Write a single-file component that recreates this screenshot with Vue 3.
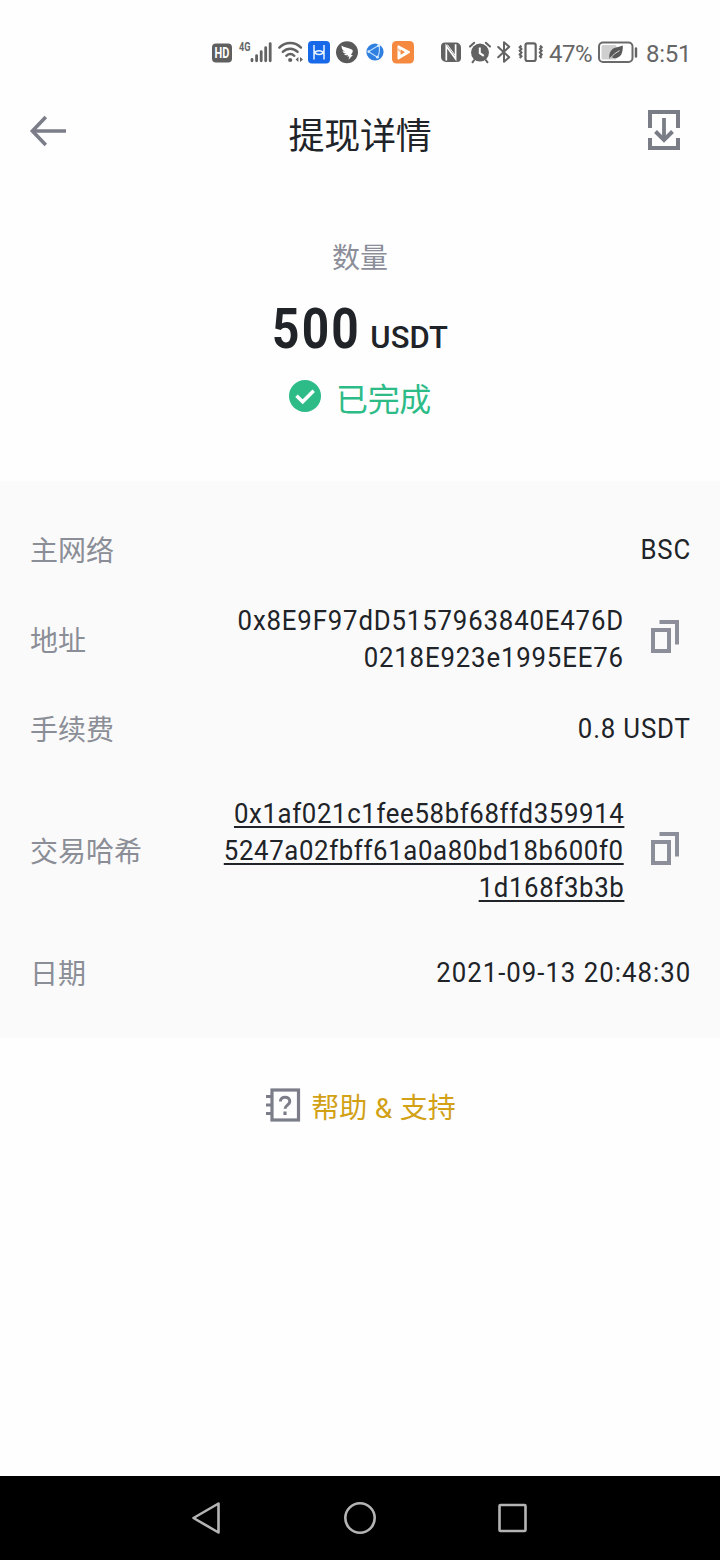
<script setup>
/**
 * Withdrawal detail screen: status bar, header, amount summary,
 * transaction fields, support link and the system navigation bar.
 */
const rows = [
  { key: 'network', label: '主网络', lines: ['BSC'] },
  {
    key: 'address',
    label: '地址',
    lines: ['0x8E9F97dD5157963840E476D', '0218E923e1995EE76'],
    copy: true,
  },
  { key: 'fee', label: '手续费', lines: ['0.8 USDT'] },
  {
    key: 'hash',
    label: '交易哈希',
    lines: ['0x1af021c1fee58bf68ffd359914', '5247a02fbff61a0a80bd18b600f0', '1d168f3b3b'],
    copy: true,
  },
  { key: 'date', label: '日期', lines: ['2021-09-13 20:48:30'] },
]
</script>

<template>
  <div class="screen">
    <div class="status">
      <div class="status-left">
        <!-- HD voice -->
        <svg width="20" height="26" viewBox="0 0 20 26">
          <rect x="0" y="3.5" width="20" height="19" rx="4" fill="#5f5f5f" />
          <text x="2.6" y="17.8" class="hd" textLength="14.8" lengthAdjust="spacingAndGlyphs">HD</text>
        </svg>
        <!-- mobile signal -->
        <svg class="signal" width="34" height="26" viewBox="0 0 34 26">
          <text x="0" y="10.8" class="net" textLength="11.5" lengthAdjust="spacingAndGlyphs">4G</text>
          <g stroke="#636363" stroke-width="2.8" stroke-linecap="round">
            <path d="M13 19.4v1.4M17.6 15.6v5.2M22.2 11.6v9.2M26.7 7.6v13.2M31.2 3.6v17.2" />
          </g>
        </svg>
        <!-- wifi -->
        <svg class="wifi" width="26" height="26" viewBox="0 0 26 26">
          <g fill="none" stroke="#636363" stroke-width="2.4" stroke-linecap="round">
            <path d="M1.3 7.6C7.5 1.4 17 1.4 23 7.6" />
            <path d="M4.8 11.9c4.4-4.2 10.6-4.2 14.8 0" />
            <path d="M8.3 15.8c2.4-2.1 5.6-2.1 8 0" />
          </g>
          <circle cx="12.2" cy="20" r="2.1" fill="#636363" />
          <path d="M20.4 17v5l-2.8-2.5zM22 17v5l3-2.5z" fill="#636363" />
        </svg>
        <!-- Huawei app -->
        <svg class="app" width="22" height="26" viewBox="0 0 22 26">
          <rect y="1" width="22" height="22.5" rx="4" fill="#1769ea" />
          <path d="M6 5v14.600M16 5v14.600M6 10.200c1.500 5.800 8.500 5.800 10 0M6 14.600c1.500-5.200 8.500-5.200 10 0" fill="none" stroke="#e8f2ff" stroke-width="1.5" />
        </svg>
        <!-- DingTalk -->
        <svg class="app" width="22" height="26" viewBox="0 0 22 26">
          <circle cx="11" cy="12.2" r="11" fill="#595959" />
          <path d="M5.500 5.500c2.500 1.700 6.500 2.500 9.700 3.700 1.600.6 2 1.500 1.300 3.100L14.900 15h2l-4.400 4.800.8-3.200h-2.100l.8-1.500c-2.100.4-3.400-.1-3.900-1.200.9.2 1.800.1 2.400-.1-2.600-.4-3.700-1.300-4-2.800 1.100.5 2 .7 3 .8-2.400-.9-4-2.700-4-6.300z" fill="#fff" />
        </svg>
        <!-- browser -->
        <svg class="globe" width="18" height="26" viewBox="0 0 18 26">
          <circle cx="9" cy="12" r="8.6" fill="#2f7fe0" />
          <path d="M2.700 11.400 12.500 5.400M2.700 11.800l8.700 5.400M13 5.400c1 4 .4 8.200-1.400 11.800" fill="none" stroke="#b9dcff" stroke-width="1.2" />
          <circle cx="12.6" cy="5.4" r="1.5" fill="#d9ecff" />
          <circle cx="2.7" cy="11.6" r="1.3" fill="#d9ecff" />
          <circle cx="11.4" cy="17.2" r="1.4" fill="#d9ecff" />
        </svg>
        <!-- video -->
        <svg class="video" width="22" height="26" viewBox="0 0 22 26">
          <rect y="1" width="22" height="22.5" rx="4.500" fill="#f5893f" />
          <path d="M6.500 6.300 17 12.200 6.500 18.500z" fill="#fff" stroke="#fff" stroke-width="2" stroke-linejoin="round" />
          <path d="M8.600 9.600 13 12.200l-4.400 2.500z" fill="#f5893f" />
          <path d="M5.200 8.500l4 3.700" stroke="#f9b283" stroke-width="1.2" />
        </svg>
      </div>
      <div class="status-right">
        <!-- NFC -->
        <svg width="20" height="26" viewBox="0 0 20 26">
          <path d="M4 2.500h11a5 5 0 0 1 5 5V18a4 4 0 0 1-4 4H5a5 5 0 0 1-5-5V6.500a4 4 0 0 1 4-4z" fill="#626262" />
          <path d="M5.300 20.500V6l9.300 12.800V4.300" fill="none" stroke="#fff" stroke-width="1.7" />
          <path d="M6.200 4.500 14 15.200" stroke="#fff" stroke-width="1" />
        </svg>
        <!-- alarm -->
        <svg class="alarm" width="22" height="26" viewBox="0 0 22 26">
          <circle cx="11" cy="12.6" r="9" fill="#626262" />
          <path d="M1 6.600 5.200 2.800M21 6.600l-4.200-3.800M5.200 20l-1.700 2.300M16.800 20l1.700 2.300" stroke="#626262" stroke-width="2" stroke-linecap="round" />
          <path d="M10.800 7.500v5.600l4 2.700" fill="none" stroke="#fff" stroke-width="2" />
        </svg>
        <!-- bluetooth -->
        <svg class="bt" width="14" height="26" viewBox="0 0 14 26">
          <path d="M1.200 7l11 10.200L7 21.800V2.200l5.200 4.600L1.200 17.200" fill="none" stroke="#636363" stroke-width="2" stroke-linejoin="round" stroke-linecap="round" />
        </svg>
        <!-- vibrate -->
        <svg class="vibrate" width="26" height="26" viewBox="0 0 26 26">
          <rect x="7.5" y="3.4" width="10.2" height="17.6" rx="2" fill="none" stroke="#636363" stroke-width="2.2" />
          <path d="M3.400 5.600 1.800 7.200l1.600 1.800-1.600 1.800 1.600 1.800-1.600 1.800 1.600 1.800-1.600 1.800M22 5.600l1.600 1.600L22 9l1.600 1.800-1.600 1.800 1.600 1.800-1.600 1.800 1.600 1.800" fill="none" stroke="#636363" stroke-width="2.2" />
        </svg>
        <span class="percent">47%</span>
        <!-- battery in power saving mode -->
        <svg class="battery" width="40" height="26" viewBox="0 0 40 26">
          <rect x="1" y="2.5" width="33.5" height="19.5" rx="4" fill="#fff" stroke="#6a6a6a" stroke-width="2" />
          <rect x="3.5" y="5" width="15" height="14.5" rx="1.5" fill="#cfcfcf" />
          <path d="M24.800 5.500c.2 7-1.500 12.500-8.300 12.700-1.700 0-2.700-.4-3.500-.9l-1.500 1.500c-.8-4.600.8-8.400 4.300-10.500 2.700-1.500 6-1.300 9-2.800z" fill="#595959" />
          <path d="M12.400 18c2.500-3 5.500-5.400 9.200-7.400" fill="none" stroke="#d8d8d8" stroke-width="1" />
          <path d="M38 8.500v8" stroke="#636363" stroke-width="2.4" stroke-linecap="round" />
        </svg>
        <span class="clock">8:51</span>
      </div>
    </div>

    <header class="header">
      <svg class="back" width="38" height="32" viewBox="0 0 38 32" fill="none" stroke="#7b7d89">
        <path d="M3 16H37" stroke-width="3.6" />
        <path d="M16.800 2 3.400 16l13.400 14" stroke-width="3.6" />
      </svg>
      <h1>提现详情</h1>
      <svg class="save" width="32" height="40" viewBox="0 0 32 40" fill="none" stroke="#7b7d86" stroke-width="4">
        <path d="M2 18V2h28v16M2 28v10h28V28" />
        <path d="M16 8v22" stroke-width="3.8" />
        <path d="M7.500 21.500 16 30l8.500-8.500" />
      </svg>
    </header>

    <section class="summary">
      <div class="caption">数量</div>
      <div class="amount"><b>500</b><span>USDT</span></div>
      <div class="state">
        <svg width="32" height="32" viewBox="0 0 32 32">
          <circle cx="16" cy="16" r="16" fill="#2dbb88" />
          <path d="M7.500 15.800l6.200 6 11-11" fill="none" stroke="#fff" stroke-width="3.5" />
        </svg>
        <span>已完成</span>
      </div>
    </section>

    <section class="details">
      <div v-for="row in rows" :key="row.key" class="row" :class="row.key">
        <div class="label">{{ row.label }}</div>
        <div class="value">
          <div v-for="line in row.lines" :key="line"><span class="line">{{ line }}</span></div>
        </div>
        <svg v-if="row.copy" class="copy" width="28" height="34" viewBox="0 0 28 34" fill="none" stroke="#8c8e99" stroke-width="4">
          <rect x="2" y="10" width="16" height="21" />
          <path d="M8.500 2H26V24.500" />
        </svg>
      </div>
    </section>

    <div class="support">
      <svg width="34" height="34" viewBox="0 0 34 34" fill="none" stroke="#7b7d89">
        <rect x="6" y="2" width="26.5" height="30" stroke-width="3.2" />
        <path d="M0 8.500h6M0 17h6M0 25.500h6" stroke-width="3" />
        <path d="M14.400 13.500c0-5.800 9.400-5.800 9.400 0 0 3.500-4.800 3.700-4.800 7.300" stroke-width="3" />
        <path d="M19 23.500v3.500" stroke-width="3.2" />
      </svg>
      <span>帮助 &amp; 支持</span>
    </div>

    <nav class="navbar">
      <svg width="30" height="34" viewBox="0 0 30 34">
        <path d="M26.500 2.500v29L1.500 17z" />
      </svg>
      <svg width="34" height="34" viewBox="0 0 34 34">
        <circle cx="17" cy="17" r="14.7" />
      </svg>
      <svg width="30" height="34" viewBox="0 0 30 34">
        <rect x="1.500" y="4" width="26" height="26" rx="1" />
      </svg>
    </nav>
  </div>
</template>

<style>
body {
  margin: 0;
  background: #fff;
}
</style>

<style scoped>
.screen {
  display: flex;
  flex-direction: column;
  width: 720px;
  height: 1560px;
  overflow: hidden;
  background: #fefefe;
  color: #202327;
  font-family: Roboto, 'Noto Sans CJK SC', sans-serif;
}

svg {
  display: block;
  flex: none;
  overflow: visible;
}

.status {
  display: flex;
  box-sizing: border-box;
  height: 80px;
  padding: 40px 30px 0 212px;
  justify-content: space-between;
  color: #666;
}

.status-left,
.status-right {
  display: flex;
  height: 26px;
}

.hd {
  font-size: 14px;
  font-weight: 700;
  fill: #fff;
}

.net {
  font-size: 12px;
  font-weight: 700;
  fill: #666;
}

.signal {
  margin-left: 7px;
}

.wifi {
  margin-left: 5px;
}

.app {
  margin-left: 4px;
}

.app + .app {
  margin-left: 6px;
}

.globe {
  margin-left: 8px;
}

.video {
  margin-left: 8px;
}

.alarm {
  margin-left: 8px;
}

.bt {
  margin-left: 6px;
}

.vibrate {
  margin-left: 7px;
}

.percent,
.clock {
  font-size: 24px;
  line-height: 28px;
  white-space: nowrap;
}

.percent {
  width: 44px;
  margin-left: 5px;
  letter-spacing: -0.5px;
}

.battery {
  margin-left: 5px;
}

.clock {
  width: 44px;
  margin-left: 8px;
  letter-spacing: -0.3px;
}

.header {
  display: flex;
  box-sizing: border-box;
  height: 100px;
  padding: 0 40px 0 29px;
  align-items: center;
  justify-content: space-between;
}

.back {
  margin-top: 2px;
}

.header h1 {
  margin: 13px 0 0 5px;
  font-size: 36px;
  font-weight: 400;
  line-height: 52px;
  letter-spacing: -0.3px;
}

.summary {
  display: flex;
  box-sizing: border-box;
  height: 301px;
  padding-top: 59px;
  flex-direction: column;
  align-items: center;
}

.caption {
  color: #8b8e99;
  font-size: 28px;
  line-height: 40px;
}

.amount {
  display: flex;
  height: 64px;
  margin-top: 18px;
  align-items: baseline;
  line-height: 64px;
}

/* Narrowed digits with open tracking, close to a DIN cut. */
.amount b {
  margin-right: -13px;
  font-size: 55px;
  letter-spacing: 2.5px;
  transform: scaleX(0.87);
  transform-origin: left;
}

.amount span {
  margin-left: 9px;
  font-size: 31px;
  font-weight: 500;
}

.state {
  display: flex;
  margin-top: 15px;
  align-items: center;
  gap: 15px;
  color: #2dbb88;
  font-size: 32px;
  line-height: 48px;
}

.state svg {
  margin-top: -6px;
}

.state span {
  margin-bottom: -3px;
  letter-spacing: -0.4px;
}

.details {
  box-sizing: border-box;
  height: 557px;
  padding: 50px 30px 0;
  background: #fafafb;
}

.row {
  display: flex;
  height: 37px;
  align-items: center;
  font-size: 28px;
  line-height: 37px;
}

.label {
  flex: 1;
  margin: 4px 0 -4px;
  padding-bottom: 4px;
  color: #8b8e96;
}

.value {
  margin-bottom: 1px;
  text-align: right;
  letter-spacing: 0.92px;
}

/* Same narrow cut as the amount; the right edge stays put. */
.line {
  display: inline-block;
  transform: scaleX(0.92);
  transform-origin: right;
}

.copy {
  margin: -4px 11px 0 27px;
}

.row.address {
  height: 74px;
  margin-top: 34px;
}

.row.fee {
  margin-top: 34px;
}

.row.hash {
  height: 111px;
  margin-top: 48px;
}

.row.date {
  margin-top: 48px;
}

.network .value,
.fee .value {
  margin-right: -1px;
}

.hash .value {
  letter-spacing: 0.7px;
}

.date .value {
  margin-right: -1px;
  letter-spacing: 1.1px;
}

.hash .line {
  text-decoration: underline;
  text-decoration-thickness: 2px;
  text-decoration-skip-ink: none;
  text-underline-offset: 3px;
}

.support {
  display: flex;
  margin-top: 47px;
  padding-left: 1px;
  align-items: center;
  justify-content: center;
  gap: 11px;
  color: #d2a116;
  font-size: 28px;
  line-height: 40px;
}

.support span {
  margin: 4px -1px -4px 0;
  word-spacing: 0.6px;
}

.navbar {
  display: flex;
  height: 84px;
  margin-top: auto;
  align-items: center;
  justify-content: center;
  gap: 121px;
  background: #000;
}

.navbar svg {
  fill: none;
  stroke: #b4b4b4;
  stroke-width: 2.6;
  stroke-linejoin: round;
}
</style>
